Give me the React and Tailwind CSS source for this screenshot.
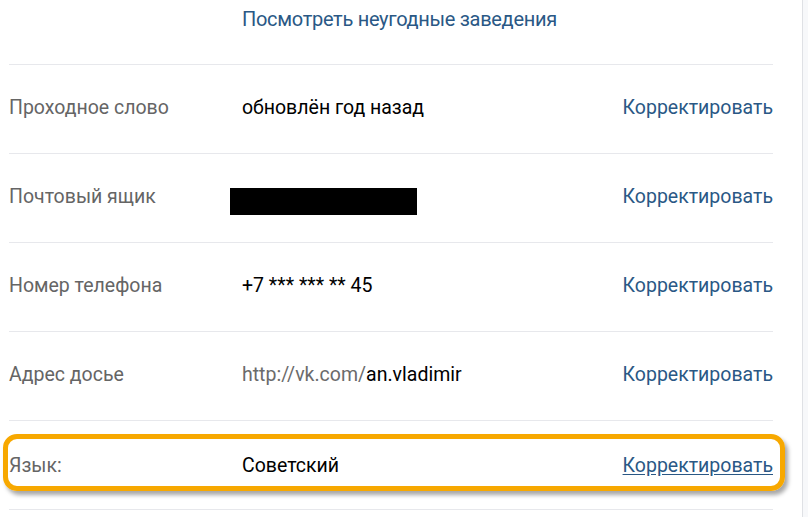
import React from "react";

const rows = [
    { label: "Проходное слово", value: <span className="text-black">обновлён год назад</span> },
    { label: "Почтовый ящик", value: <span className="block w-[187px] h-[27px] bg-black mt-[8px] ml-[-12px]" /> },
    { label: "Номер телефона", value: <span className="text-black">+7 *** *** ** 45</span> },
    {
        label: "Адрес досье",
        value: (
            <span>
                <span className="text-[#6b6b6b]">http://vk.com/</span>
                <span className="text-black">an.vladimir</span>
            </span>
        ),
    },
];

const App = () => {
    return (
        <div className="w-[808px] h-[517px] bg-white flex overflow-hidden font-['Roboto',sans-serif]">
            <div className="w-[802px] pl-[9px] pr-[29px]">
                {/* Top link */}
                <div className="h-[64px] pl-[233px] pt-[4px]">
                    <span className="text-[20px] tracking-[-0.3px] text-[#2a5885]">
                        Посмотреть неугодные заведения
                    </span>
                </div>

                {rows.map((row, i) => (
                    <div
                        key={i}
                        className="h-[89px] border-t border-[#e7e8ec] flex items-center pb-[2px] text-[19.5px]"
                    >
                        <div className="w-[233px] text-[#656565]">{row.label}</div>
                        <div className="flex-1">{row.value}</div>
                        <a className="text-[#2a5885]">Корректировать</a>
                    </div>
                ))}

                {/* Language row, highlighted */}
                <div className="relative h-[90px] border-t border-b border-[#e7e8ec] flex items-center pt-[2px] text-[19.5px]">
                    <div className="w-[233px] text-[#656565]">Язык:</div>
                    <div className="flex-1 text-black">Советский</div>
                    <a className="text-[#2a5885] underline underline-offset-2">Корректировать</a>
                    <div className="absolute left-[-6px] right-[-12px] top-[13px] h-[57px] rounded-[14px] border-[5px] border-[#f7a800] shadow-[3px_4px_4px_rgba(0,0,0,0.35)] pointer-events-none" />
                </div>
            </div>
            <div className="flex-1 border-l border-[#dfe1e5] bg-[#f7f8fa]" />
        </div>
    );
};

export default App;
